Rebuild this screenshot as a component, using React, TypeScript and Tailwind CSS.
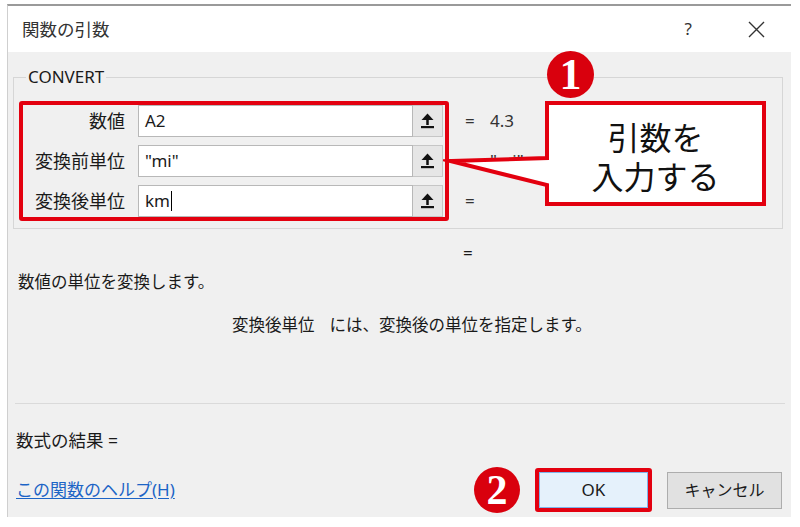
import type { ReactNode } from "react"

type ArgRow = {
  label: string
  value: string
  result: string
  caret?: boolean
}

const ROWS: ArgRow[] = [
  { label: "数値", value: "A2", result: "4.3" },
  { label: "変換前単位", value: "\"mi\"", result: "\"mi\"" },
  { label: "変換後単位", value: "km", result: "", caret: true },
]

function CloseIcon({ className = "" }: { className?: string }) {
  return (
    <svg width="17" height="17" viewBox="0 0 17 17" className={className}>
      <path d="M1 1 L16 16 M16 1 L1 16" stroke="#333" strokeWidth="1.4" fill="none" />
    </svg>
  )
}

// collapse-dialog button glyph (arrow up with a bar below)
function RefIcon() {
  return (
    <svg width="13" height="16" viewBox="0 0 13 16">
      <polygon points="6.5,0.5 12.5,7 0.5,7" fill="#111" />
      <rect x="5.25" y="6" width="2.5" height="6" fill="#111" />
      <rect x="0" y="13" width="13" height="2.2" fill="#111" />
    </svg>
  )
}

function Badge({ children, className = "" }: { children: ReactNode; className?: string }) {
  return (
    <div
      className={`flex items-center justify-center rounded-full bg-[#d9000d] font-['Liberation_Serif',serif] font-bold text-white ${className}`}
    >
      {children}
    </div>
  )
}

export default function App() {
  return (
    <div className="relative h-[527px] w-[800px] overflow-hidden bg-white pl-[7px] pt-[4px] font-['Noto_Sans','Noto_Sans_CJK_JP',sans-serif] text-[#1a1a1a]">
      <div className="flex h-[513px] w-[784px] flex-col border-l border-t-2 border-l-[#cfcfcf] border-t-[#9a9a9a]">
        {/* Title bar */}
        <div className="flex h-[46px] shrink-0 items-center bg-white pl-[14px] pr-[26px]">
          <span className="text-[17.5px] leading-6 text-[#333]">関数の引数</span>
          <span className="ml-auto text-[17px] leading-6 text-[#333]">?</span>
          <CloseIcon className="ml-[56px]" />
        </div>

        {/* Body */}
        <div className="relative flex flex-1 flex-col bg-[#f0f0f0] pt-[13px]">
          <fieldset className="ml-[5px] mr-[8px] border border-[#d6d6d6] pb-[7px]">
            <legend className="ml-[12px] px-[2px] text-[17px] leading-6">CONVERT</legend>
            <div className="ml-[5px] mt-[12px] flex">
              {/* highlighted argument inputs */}
              <div className="flex h-[120px] w-[430px] flex-col gap-2 rounded-[3px] border-4 border-[#e3000f] pr-[2px]">
                {ROWS.map((row) => (
                  <div key={row.label} className="flex h-[32px] items-center">
                    <span className="w-[102px] text-right text-[18px] leading-6">{row.label}</span>
                    <div className="ml-[13px] flex h-full flex-1">
                      <div className="flex flex-1 items-center border border-[#b8b8b8] bg-white pl-[6px] text-[17px] leading-6">
                        {row.value}
                        {row.caret && <span className="ml-[1px] h-[20px] w-px bg-black" />}
                      </div>
                      <div className="flex w-[30px] items-center justify-center border border-l-0 border-[#c6c6c6] bg-[#e6e6e6]">
                        <RefIcon />
                      </div>
                    </div>
                  </div>
                ))}
              </div>

              {/* evaluated values */}
              <div className="ml-[16px] flex flex-col gap-2 pt-[4px]">
                {ROWS.map((row) => (
                  <div key={row.label} className="flex h-[32px] items-center text-[17px] leading-6 text-[#333]">
                    <span className="w-[25px]">=</span>
                    <span>{row.result}</span>
                  </div>
                ))}
              </div>
            </div>
          </fieldset>

          <div className="mt-[12px] pl-[455px] text-[17px] leading-6">=</div>
          <div className="mt-[5px] pl-[10px] text-[16.5px] leading-6">数値の単位を変換します。</div>
          <div className="mt-[19px] flex gap-[15px] pl-[224px] text-[16.5px] leading-6">
            <span>変換後単位</span>
            <span>には、変換後の単位を指定します。</span>
          </div>

          <div className="ml-[7px] mr-[6px] mt-[66px] border-t border-[#dadada]" />

          <div className="mt-[24px] pl-[8px] text-[17.5px] leading-6">数式の結果 =</div>

          {/* Footer */}
          <div className="mt-[16px] flex h-[44px] items-center pl-[8px] pr-[9px]">
            <a href="#" className="text-[17px] leading-6 text-[#1c64c6] underline underline-offset-2">
              この関数のヘルプ(H)
            </a>
            <Badge className="ml-auto h-[46px] w-[46px] text-[42px] leading-none">2</Badge>
            <div className="ml-[15px] flex h-[44px] w-[117px] rounded-[3px] border-4 border-[#e3000f]">
              <button
                type="button"
                className="flex-1 border border-[#7eb4ea] bg-[#e5f1fb] text-[17px] leading-6"
              >
                OK
              </button>
            </div>
            <button
              type="button"
              className="ml-[15px] h-[37px] w-[115px] border border-[#adadad] bg-[#e1e1e1] text-[16px] leading-6"
            >
              キャンセル
            </button>
          </div>

          {/* Annotation: step 1 badge */}
          <Badge className="absolute left-[539px] top-[-1px] h-[47px] w-[47px] text-[44px] leading-none">1</Badge>

          {/* Annotation: callout */}
          <div className="absolute left-[537px] top-[49px] flex h-[105px] w-[221px] flex-col items-center justify-center pt-[6px]">
            <svg
              width="325"
              height="109"
              viewBox="0 0 325 109"
              className="absolute left-[-102px] top-[-2px]"
            >
              <path
                d="M104 4 H321 V105 H104 V86 L7 62 L104 59 Z"
                fill="#fff"
                stroke="#e3000f"
                strokeWidth="4"
                strokeLinejoin="miter"
                strokeMiterlimit="20"
              />
            </svg>
            <span className="relative text-[32px] leading-[39px] text-[#111]">引数を</span>
            <span className="relative text-[32px] leading-[39px] text-[#111]">入力する</span>
          </div>
        </div>
      </div>
    </div>
  )
}
